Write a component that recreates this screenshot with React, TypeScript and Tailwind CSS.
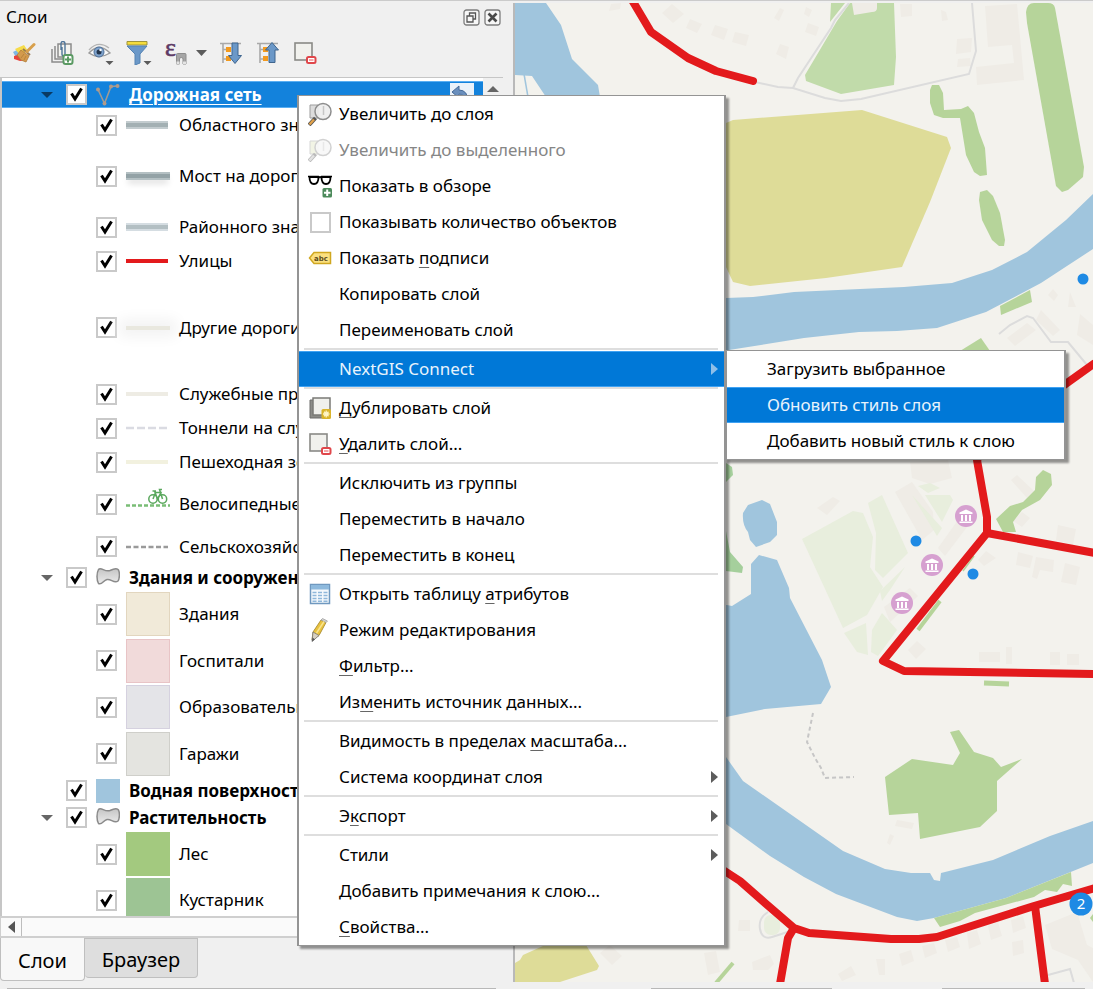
import { useState, type ReactNode } from "react";
import clsx from "clsx";

/* ---------- small drawings ---------- */

function CheckMark() {
  return (
    <svg viewBox="0 0 21 21" className="pointer-events-none col-start-1 row-start-1 size-[21px]" aria-hidden="true">
      <path d="M5.500 9.500 9 15 15.500 4.500" fill="none" stroke="#000" strokeWidth="3" />
    </svg>
  );
}

function CheckBox({ checked, onChange }: { checked: boolean; onChange: () => void }) {
  return (
    <span className="grid size-[21px] shrink-0">
      <input
        type="checkbox"
        checked={checked}
        onChange={onChange}
        className="col-start-1 row-start-1 size-[21px] appearance-none border-2 border-[#c9c9c9] bg-white"
      />
      {checked && <CheckMark />}
    </span>
  );
}

function PolygonIcon() {
  return (
    <svg viewBox="0 0 24 24" className="size-6" aria-hidden="true">
      <defs>
        <linearGradient id="poly" x1="0" y1="0" x2="0" y2="1">
          <stop offset="0" stopColor="#c4c4c4" />
          <stop offset="1" stopColor="#ececec" />
        </linearGradient>
      </defs>
      <path
        d="M2.500 3.500C5 .5 9 6.500 14 4.500C18 2.500 21 1.500 22.500 4C24 7 23.500 13 22 15C18 18 15 12.500 11 13.500C7 14.500 6 19.500 2.500 17.500C.5 14 .5 7 2.500 3.500Z"
        fill="url(#poly)"
        stroke="#8a8a8a"
        strokeWidth="1.500"
      />
    </svg>
  );
}

function LineIcon() {
  return (
    <svg viewBox="0 0 24 24" className="size-6" aria-hidden="true">
      <path d="M2 6.500 8.500 20.500 15 3.500 21.500 3" fill="none" stroke="#a09a94" strokeWidth="1.600" />
      <g fill="#b09a8a">
        <circle cx="2" cy="6.500" r="2" />
        <circle cx="8.500" cy="20.500" r="2" />
        <circle cx="15" cy="3.500" r="2" />
        <circle cx="21.500" cy="3" r="2" />
      </g>
    </svg>
  );
}

function BrushIcon() {
  return (
    <svg viewBox="0 0 24 24" className="size-6" aria-hidden="true">
      <path d="M1 11 5 9 10 16 5 18Z" fill="#7db8e6" />
      <path d="M3 8 12 4 16 10 8 14Z" fill="#f6dc4a" />
      <path d="M2 15 9 13 15 19 8 20 2 18Z" fill="#e8433b" />
      <path d="M9 9 17 15 14 21 9 19 5 14Z" fill="#d39a4c" stroke="#b17c38" strokeWidth=".8" />
      <path d="M11 8 18 14" stroke="#9a7850" strokeWidth="2" />
      <path d="M15 10.500 22 3.500" stroke="#d8a04c" strokeWidth="3" strokeLinecap="round" />
      <path d="M9 17 12 13M12 19 14 15" stroke="#b17c38" strokeWidth=".8" />
    </svg>
  );
}

function AddGroupIcon() {
  return (
    <svg viewBox="0 0 24 24" className="size-6" aria-hidden="true">
      <g fill="#f3f3ef" stroke="#8b8b8b" strokeWidth="1.500">
        <path d="M2 8V21H14" fill="none" />
        <path d="M5 5V18H17" fill="none" />
        <rect x="8" y="3" width="13" height="13" />
      </g>
      <path d="M11 9V3Q11 .5 13 .5T15 3V13Q15 15 13.500 15T12 13V6" fill="none" stroke="#4f7599" strokeWidth="1.400" />
      <rect x="13.500" y="14" width="9" height="9" rx="2" fill="#fff" stroke="#5b9a63" strokeWidth="2" />
      <path d="M18 15.500V21.500M15 18.500H21" stroke="#5b9a63" strokeWidth="2" />
    </svg>
  );
}

function EyeIcon() {
  return (
    <svg viewBox="0 0 26 24" className="h-6 w-[26px]" aria-hidden="true">
      <path d="M1 12Q11 1 22 12Q11 19 1 12Z" fill="#fbfbfb" stroke="#9b9b9b" strokeWidth="1.400" />
      <path d="M1 9Q10-1 21 7" fill="none" stroke="#b4b4b4" strokeWidth="1.300" />
      <circle cx="11" cy="11" r="5" fill="#7fa3cd" stroke="#4d6f98" />
      <circle cx="11" cy="11" r="2.500" fill="#24364e" />
      <circle cx="12.500" cy="9" r="1.200" fill="#fff" />
      <path d="M17.500 20H25.500L21.500 24Z" fill="#5b5b5b" />
    </svg>
  );
}

function FilterIcon() {
  return (
    <svg viewBox="0 0 26 24" className="h-6 w-[26px]" aria-hidden="true">
      <path d="M1 .5H21V4H1Z" fill="#f4dc3c" stroke="#a0953a" />
      <path d="M1 5H21L14 13V22L9 24V13Z" fill="#6b98c8" stroke="#5583b3" />
      <path d="M17.500 20H25.500L21.500 24Z" fill="#5b5b5b" />
    </svg>
  );
}

function ExpressionIcon() {
  return (
    <svg viewBox="0 0 24 24" className="size-6 overflow-visible" aria-hidden="true">
      <text x="1" y="15" fontSize="26" fill="#5d3a66" stroke="#5d3a66" strokeWidth=".6" fontFamily="Liberation Serif, serif">
        ε
      </text>
      <path d="M12.500 23V13.500Q12.500 12.500 13.500 12.500H21Q22 12.500 22 13.500V23H19V18Q19 16.500 17.200 16.500T15.500 18V23Z" fill="#a6a6a6" stroke="#8e8e8e" />
      <path d="M12.500 20.500H15.500V23H12.500ZM19 20.500H22V23H19Z" fill="#e4e4e4" />
    </svg>
  );
}

function TreeArrowIcon({ up }: { up?: boolean }) {
  return (
    <svg viewBox="0 0 24 24" className="size-6" aria-hidden="true">
      <path d="M1 2.500H22M4 2.500V22M4 8.500H8M4 18H8" fill="none" stroke="#a9a9a9" strokeWidth="1.600" />
      <rect x="7" y="6" width="5" height="5" fill="#f39a1e" />
      <rect x="7" y="15" width="5" height="5" fill="#f39a1e" />
      <path
        d={up ? "M13 21.500V9H9.500L16 1.500 22.500 9H19V21.500Z" : "M13 2V14.500H9.500L16 22.500 22.500 14.500H19V2Z"}
        fill="#6b98c8"
        stroke="#3f658e"
      />
    </svg>
  );
}

function RemoveIcon() {
  return (
    <svg viewBox="0 0 24 24" className="size-6" aria-hidden="true">
      <rect x="2" y="2" width="17" height="17" fill="#f1f1ed" stroke="#8a8a86" strokeWidth="1.600" />
      <rect x="14" y="16" width="8.500" height="6" rx="1.500" fill="#fff" stroke="#e0474b" strokeWidth="2" />
      <path d="M16 19H20.500" stroke="#f08a8c" strokeWidth="1.500" />
    </svg>
  );
}

function ZoomIcon({ faded }: { faded?: boolean }) {
  return (
    <svg viewBox="0 0 24 24" className={clsx("size-6", faded && "opacity-40")} aria-hidden="true">
      <path d="M2 3H10V16H2Z" fill={faded ? "#dfe6c0" : "#dcdcdc"} stroke="#9d9d9d" />
      <path d="M1 23 7.500 16" stroke="#555" strokeWidth="4" />
      <path d="M1.500 22.500 6 17.500" stroke={faded ? "#bbb" : "#e2a24a"} strokeWidth="2.400" />
      <circle cx="15" cy="9.500" r="8" fill="#ededed" fillOpacity=".9" stroke="#8d8d8d" strokeWidth="1.500" />
      <path d="M15.500 4V13" stroke="#c6c6c6" strokeWidth="1.500" />
    </svg>
  );
}

function OverviewIcon() {
  return (
    <svg viewBox="0 0 24 24" className="size-6" aria-hidden="true">
      <path d="M0 2.500H10.500L12 3.500 13.500 2.500H24" fill="none" stroke="#000" strokeWidth="1.500" />
      <path d="M1.500 3Q1.500 10 6 10T10.500 3ZM13.500 3Q13.500 10 18 10T22.500 3Z" fill="#fff" stroke="#000" strokeWidth="1.800" />
      <rect x="14.500" y="14" width="9.500" height="9.500" rx="1.500" fill="#4c8a5b" />
      <path d="M19.200 15.500V22M16 18.700H22.500" stroke="#fff" strokeWidth="2" />
    </svg>
  );
}

function LabelIcon() {
  return (
    <svg viewBox="0 0 24 24" className="size-6" aria-hidden="true">
      <path d="M6 6.500H22.500V17.500H6L1.500 12Z" fill="#fbe080" stroke="#d0a720" strokeWidth="1.500" />
      <text x="6" y="15" fontSize="7" fontWeight="700" fill="#5d4c1c" fontFamily="DejaVu Sans, sans-serif">
        abc
      </text>
    </svg>
  );
}

function DuplicateIcon() {
  return (
    <svg viewBox="0 0 24 24" className="size-6" aria-hidden="true">
      <path d="M2 4H7V18H17V22H2Z" fill="#8c8c88" stroke="#6d6d6a" />
      <rect x="5" y="2" width="17" height="17" fill="#f0f0ec" stroke="#7a7a76" strokeWidth="1.500" />
      <rect x="13.500" y="13" width="9.500" height="10" rx="1.500" fill="#d9b42c" />
      <path d="M18.200 14.500V21.500M15 18H21.500M16 15.700 20.500 20.300M20.500 15.700 16 20.300" stroke="#fff6c8" strokeWidth="1.300" />
    </svg>
  );
}

function TableIcon() {
  return (
    <svg viewBox="0 0 24 24" className="size-6" aria-hidden="true">
      <rect x="2.500" y="2.500" width="19" height="19" fill="#f4f8fc" stroke="#6f98bf" strokeWidth="1.500" />
      <path d="M3 3H21V7.500H3Z" fill="#8db9dd" />
      <path
        d="M4.500 10.500H8.500M10 10.500H14M15.500 10.500H19.500M4.500 13.500H8.500M10 13.500H14M15.500 13.500H19.500M4.500 16.500H8.500M10 16.500H14M15.500 16.500H19.500M4.500 19.200H8.500M10 19.200H14M15.500 19.200H19.500"
        stroke="#8fb7da"
        strokeWidth="1.600"
      />
    </svg>
  );
}

function PencilIcon() {
  return (
    <svg viewBox="0 0 24 24" className="size-6" aria-hidden="true">
      <path d="M5 14 13 2 18 4.500 11 17.500 4 22Z" fill="#e9c23e" stroke="#a98c30" strokeWidth=".9" />
      <path d="M13 2 14.500 .5 19.500 3 18 4.500Z" fill="#d2d2d2" stroke="#999" strokeWidth=".7" />
      <path d="M5 14 11 17.500 4 23.500Z" fill="#d8d0c0" stroke="#777" strokeWidth=".8" />
      <path d="M4.500 19.500 7 21.500 4 23.500Z" fill="#555" />
      <path d="M8.500 15 16 3.500" stroke="#f8e48f" strokeWidth="1.500" />
    </svg>
  );
}

function Bike() {
  return (
    <svg viewBox="0 0 44 34" className="h-[34px] w-11" aria-hidden="true">
      <g fill="none" stroke="#5ba85e" strokeWidth="1.500">
        <circle cx="27" cy="12" r="4.200" />
        <circle cx="36.500" cy="12" r="4.200" />
        <path d="M27 12 29.500 5.500H35L31.500 12 28.500 4M26.500 4H30M36.500 12 33.500 2.500H36" />
      </g>
      <path d="M0 18.500H44" stroke="#79bd76" strokeWidth="2.500" strokeDasharray="4 2" />
    </svg>
  );
}

/* ---------- layer tree ---------- */

type Row = {
  name: string;
  height: string;
  group?: boolean;
  expandable?: boolean;
  symbol: ReactNode;
};

const line = (cls: string) => <span className={clsx("block w-[42px]", cls)} />;
const dashes = (color: string, dash: string) => (
  <svg viewBox="0 0 42 4" className="h-1 w-[42px]" aria-hidden="true">
    <path d="M0 2H42" stroke={color} strokeWidth="2.500" strokeDasharray={dash} />
  </svg>
);
const fill = (cls: string) => <span className={clsx("block size-11 border", cls)} />;

const ROWS: Row[] = [
  { name: "Дорожная сеть", height: "h-[27px]", group: true, expandable: true, symbol: <LineIcon /> },
  { name: "Областного знач.", height: "h-[34px]", symbol: line("h-2 border-y-2 border-[#c3cccf] bg-[#a3b0b3]") },
  {
    name: "Мост на дороге",
    height: "h-[68px]",
    symbol: <span className="block h-2 w-11 border-y-2 border-[#b4c0c3] bg-[#93a2a6] shadow-[0_5px_6px_-2px_#d4d4d4]" />,
  },
  { name: "Районного знач.", height: "h-[34px]", symbol: line("h-2 border-y-2 border-[#d5dde2] bg-[#b3bfc3]") },
  { name: "Улицы", height: "h-[34px]", symbol: line("h-1 bg-[#e31a1c]") },
  {
    name: "Другие дороги",
    height: "h-[99px]",
    symbol: <span className="block h-1 w-11 bg-[#e9e8df] shadow-[0_0_14px_7px_#f3f3f3]" />,
  },
  { name: "Служебные пр-ды", height: "h-[34px]", symbol: line("h-1 bg-[#eeece4]") },
  { name: "Тоннели на служ.", height: "h-[34px]", symbol: dashes("#dadbe2", "8 3") },
  { name: "Пешеходная зона", height: "h-[34px]", symbol: line("h-1 bg-[#f2f1df]") },
  { name: "Велосипедные", height: "h-[50px]", symbol: <Bike /> },
  { name: "Сельскохозяйств.", height: "h-[35px]", symbol: dashes("#9a9a9a", "5 2.500") },
  { name: "Здания и сооружения", height: "h-[27px]", group: true, expandable: true, symbol: <PolygonIcon /> },
  { name: "Здания", height: "h-[46px]", symbol: fill("border-[#e2d6bf] bg-[#f1ead9]") },
  { name: "Госпитали", height: "h-[47px]", symbol: fill("border-[#e8c4c6] bg-[#f1dada]") },
  { name: "Образовательные", height: "h-[46px]", symbol: fill("border-[#d5d1df] bg-[#e4e4e8]") },
  { name: "Гаражи", height: "h-[47px]", symbol: fill("border-[#cfcfca] bg-[#e4e4e0]") },
  { name: "Водная поверхность", height: "h-[27px]", group: true, symbol: <span className="block size-6 bg-[#a0c5dd]" /> },
  { name: "Растительность", height: "h-[27px]", group: true, expandable: true, symbol: <PolygonIcon /> },
  { name: "Лес", height: "h-[46px]", symbol: fill("border-[#a3c97f] bg-[#a3c97f]") },
  { name: "Кустарник", height: "h-[46px]", symbol: fill("border-[#9dc494] bg-[#9dc494]") },
];

function TreeRow({ row, selected }: { row: Row; selected: boolean }) {
  const [checked, setChecked] = useState(true);
  return (
    <li
      className={clsx(
        "flex shrink-0 items-center",
        row.height,
        row.group ? "pl-[39px]" : "pl-[94px]",
        selected && "border-y border-[#5aaef2] bg-[#1382dc]",
      )}
    >
      {row.group && (
        <button type="button" aria-label={row.name} className={clsx("flex w-[25px] shrink-0", !row.expandable && "invisible")}>
          <svg viewBox="0 0 12 6" className="h-1.5 w-3" aria-hidden="true">
            <path d="M0 0H12L6 6Z" fill={selected ? "#0a3a63" : "#666"} />
          </svg>
        </button>
      )}
      <label className="flex h-full items-center gap-[9px]">
        <CheckBox checked={checked} onChange={() => setChecked(!checked)} />
        <span className={clsx("flex shrink-0 items-center", row.group ? "w-6" : "w-11")}>{row.symbol}</span>
        <span
          className={clsx(
            "whitespace-nowrap",
            row.group && "font-bold",
            selected && "text-white underline decoration-1 underline-offset-[3px]",
          )}
        >
          {row.name}
        </span>
      </label>
      {selected && (
        <button type="button" aria-label="Вернуть" className="ml-auto mr-[9px] bg-[#eaf2fa]">
          <svg viewBox="0 0 24 24" className="size-6" aria-hidden="true">
            <path d="M2 9 9 3V7Q18 7 18 19H15Q15 11 9 11V15Z" fill="#6a8fbd" stroke="#466a98" />
          </svg>
        </button>
      )}
    </li>
  );
}

function LayersPanel() {
  return (
    <aside className="flex w-[503px] shrink-0 flex-col">
      <header className="flex h-7 items-center justify-between pl-1.5 pr-0.5">
        <h1 className="text-[17px]">Слои</h1>
        <div className="flex gap-1">
          <button type="button" aria-label="Открепить">
            <svg viewBox="0 0 17 17" className="size-[17px]" aria-hidden="true">
              <rect x="1" y="1" width="15" height="15" rx="2.500" fill="#f7f7f7" stroke="#7d7d7d" strokeWidth="1.300" />
              <path d="M6.500 7V4H12.500V10H10M4 7H10V13H4Z" fill="none" stroke="#555" strokeWidth="1.300" />
            </svg>
          </button>
          <button type="button" aria-label="Закрыть">
            <svg viewBox="0 0 17 17" className="size-[17px]" aria-hidden="true">
              <rect x="1" y="1" width="15" height="15" rx="2.500" fill="#f7f7f7" stroke="#7d7d7d" strokeWidth="1.300" />
              <path d="M4.500 4.500 12.500 12.500M12.500 4.500 4.500 12.500" stroke="#4a4a4a" strokeWidth="2.600" />
            </svg>
          </button>
        </div>
      </header>

      <div className="flex h-[46px] items-center gap-3.5 pl-3 pb-0.5">
        <button type="button" aria-label="Стили слоя"><BrushIcon /></button>
        <button type="button" aria-label="Добавить группу"><AddGroupIcon /></button>
        <button type="button" aria-label="Видимость карты"><EyeIcon /></button>
        <button type="button" aria-label="Фильтр легенды" className="-ml-0.5"><FilterIcon /></button>
        <div className="-ml-0.5 flex items-center gap-2">
          <button type="button" aria-label="Фильтр по выражению"><ExpressionIcon /></button>
          <button type="button" aria-label="Параметры фильтра">
            <svg viewBox="0 0 11 6" className="h-1.5 w-[11px]" aria-hidden="true">
              <path d="M0 0H11L5.500 6Z" fill="#5b5b5b" />
            </svg>
          </button>
        </div>
        <div className="-ml-0.5 flex gap-[13px]">
          <button type="button" aria-label="Развернуть все"><TreeArrowIcon /></button>
          <button type="button" aria-label="Свернуть все"><TreeArrowIcon up /></button>
          <button type="button" aria-label="Удалить слой"><RemoveIcon /></button>
        </div>
      </div>

      <div className="flex min-h-0 flex-1 border-l-2 border-t border-[#c6c6c6] bg-white">
        <ul className="flex min-w-0 flex-1 flex-col overflow-hidden pt-[3px] text-[17px]">
          {ROWS.map((row, i) => (
            <TreeRow key={row.name} row={row} selected={i === 0} />
          ))}
        </ul>
        <div className="flex w-5 flex-col items-center bg-[#f0f0f0] pt-2">
          <svg viewBox="0 0 12 6" className="h-1.5 w-3" aria-hidden="true">
            <path d="M0 6H12L6 0Z" fill="#666" />
          </svg>
        </div>
      </div>
      <div className="flex h-[22px] shrink-0 border-y-2 border-l border-[#cfcfcf] bg-[#fafafa]">
        <button type="button" aria-label="Прокрутить влево" className="flex w-[21px] items-center justify-center border-r border-[#bdbdbd]">
          <svg viewBox="0 0 7 12" className="h-3 w-[7px]" aria-hidden="true">
            <path d="M7 0V12L0 6Z" fill="#555" />
          </svg>
        </button>
      </div>

      <div role="tablist" className="flex h-11 shrink-0 items-start text-[20px]">
        <button type="button" role="tab" aria-selected className="h-[43px] w-[85px] rounded-b border border-t-0 border-[#bfbfbf] bg-[#f8f8f8] pt-1">
          Слои
        </button>
        <button type="button" role="tab" aria-selected={false} className="h-10 w-[113px] rounded-b border border-l-0 border-[#bfbfbf] bg-[#dedede] pt-1">
          Браузер
        </button>
      </div>
    </aside>
  );
}

/* ---------- map ---------- */

const BUILDINGS = [
  "M611 4 621 3 620 9 609 11Z",
  "M662 13 672 4 684 14 673 23Z",
  "M690 19 702 24 697 33 686 28Z",
  "M715 25 728 29 724 40 711 35Z",
  "M735 32 749 35 746 46 732 42Z",
  "M780 44 789 47 786 59 776 54Z",
  "M780 8 784 10 779 21 774 18Z",
  "M808 23 819 27 816 36 805 32Z",
  "M806 7 812 10 809 17 804 14Z",
  "M900 4H912V16L901 17Z",
  "M941 10 946 12 948 20 942 21Z",
  "M957 39 972 38 971 52 956 54Z",
  "M958 59 970 58 971 66 957 67Z",
  "M985 6 1017 4 1024 80 977 85 976 67 1014 63 1012 45 988 47Z",
  "M1053 289 1058 295 1054 301 1048 295Z",
  "M1070 292 1076 307 1068 307Z",
  "M1041 310 1060 330 1053 336 1036 320Z",
  "M1007 338 1027 323 1036 330 1015 346Z",
  "M1080 314 1093 325V345L1077 335Z",
  "M895 492 912 482 933 512 934 530 922 540Z",
  "M884 607 910 588 918 596 890 622Z",
  "M938 548 958 520 967 527 945 556Z",
  "M817 508 833 497 840 501 827 515Z",
  "M910 462 948 460 952 478 930 484 912 478Z",
  "M1017 475 1034 491 1027 498 1011 480Z",
  "M1022 512 1030 518 1022 527 1013 521Z",
  "M1058 525 1076 529 1073 545 1056 540Z",
  "M1065 563 1080 567 1076 585 1061 582Z",
  "M1018 552 1033 556 1030 568 1016 565Z",
  "M1036 557 1054 560 1053 572 1040 570 1037 579 1032 577Z",
  "M986 551 996 558 984 566 978 560Z",
  "M917 641 926 649 916 659 908 650Z",
  "M979 652H1000V662H979Z",
  "M1006 647H1012V664H1006Z",
  "M1050 652H1060V665H1050Z",
  "M1067 654H1079V665H1067Z",
  "M897 820 914 823 912 829 895 826Z",
  "M890 834 894 836 890 845 887 843Z",
  "M739 920H750V931H738Z",
  "M610 945 622 956 612 965 600 953Z",
  "M704 953 716 951 720 972 708 975Z",
  "M752 962 770 955 774 964 768 970H753Z",
  "M838 974 851 966 856 975 842 981Z",
  "M876 959H885V975H879Z",
  "M899 954 911 950 914 961 902 966Z",
  "M922 946 934 943 937 953 925 958Z",
  "M945 940 957 937 960 947 948 952Z",
  "M967 933 977 930 981 944 969 949Z",
  "M988 926 998 922 1002 936 991 940Z",
  "M1011 920 1023 916 1026 928 1013 933Z",
  "M1012 942 1023 940 1024 953 1013 956Z",
  "M1045 925 1077 912 1087 945 1093 948V982L1078 960 1052 949Z",
];

const MUSEUMS = [
  [966, 516],
  [932, 565],
  [902, 603],
];

const POINTS = [
  [1083, 279],
  [916, 541],
  [973, 574],
];

function MapCanvas() {
  return (
    <svg
      viewBox="515 3 578 979"
      preserveAspectRatio="xMinYMin slice"
      className="absolute inset-0 size-full bg-[#f3f2ed]"
      role="img"
      aria-label="Карта"
    >
      <g fill="#efece6">
        {BUILDINGS.map((d) => (
          <path key={d} d={d} />
        ))}
      </g>
      <g fill="#e8eedd">
        <path d="M802 539 853 511 863 513 873 537 870 567 883 587 867 615 843 628Z" />
        <path d="M868 503 882 495 908 553 883 578 875 570 876 533Z" />
        <path d="M844 633 866 623 868 655 857 652Z" />
        <path d="M882 613 897 630 878 656 871 652 872 630Z" />
        <path d="M918 486 930 483 940 488 928 493Z" />
        <path d="M912 495 942 528 937 536Z" />
        <path d="M925 495 950 495 953 500 942 522Z" />
        <path d="M880 591 905 567 890 590 882 601Z" />
        <rect x="764" y="915" width="16" height="20" rx="7" />
      </g>
      <g fill="#a0c5dd">
        <path d="M515 3H546L561 25 572 59 598 85 600 97H546L532 76 515 75Z" />
        <path d="M700 299 726 298 753 297 794 292 904 287 952 283 992 270 1027 252 1066 220 1093 194V249L1041 283 986 312 937 328 897 331 859 332 804 338 729 350H700Z" />
        <path d="M743 513 748 505 762 500 770 504 777 522V535L770 542 756 547 750 540 748 532Q742 525 743 513Z" />
        <path d="M700 605H727L732 606 751 594V564L759 555 777 560 789 588 790 598 822 660 831 687 821 704 765 709 726 717H700Z" />
        <path d="M700 720 726 757 743 781 843 851 885 869 911 873H930L934 880 940 881 941 873 993 860 1050 836 1093 821V863L1006 898 934 918 917 921 897 917 836 894 804 877 770 856 726 824 700 800Z" />
      </g>
      <path d="M524 74 528 97" stroke="#a0c5dd" strokeWidth="1.500" />
      <g fill="#dedc98">
        <path d="M726 123 733 120 862 110 947 137 951 148 930 202 902 267 826 278 750 286 733 282 726 267Z" />
        <path d="M515 963 520 960 523 955 543 946 586 945 599 966 597 970 560 982H515Z" />
      </g>
      <path d="M805 75 806 81 841 94 894 85 896 57 894 3H850L837 21ZM831 3H845L830 22Z" fill="#c1dbaa" />
      <path d="M852 3H877V8Q877 12 872 12L854 15Z" fill="#efece6" />
      <g fill="#b6d49a">
        <path d="M1027 23 1026 12Q1027 3 1034 3H1048Q1054 3 1055 8L1084 167 1083 177 1068 190 1062 192 1056 186Z" />
        <path d="M932 85H939L943 93 944 110 961 109 968 106 974 113 979 132 985 148 987 175 980 176 974 172 966 155 960 118H943L934 115 930 103V90Z" />
        <path d="M980 192 987 190 993 196 1000 213 1005 240 1004 246H999L992 240 982 220 979 200Z" />
        <path d="M1000 306 1030 290 1032 302 1001 315Z" />
        <path d="M960 351 981 338 990 351Z" />
        <path d="M1043 470 1051 474 1052 485 1040 500 1022 510 1013 522 1016 532H1003L996 519 1010 506 1023 502 1035 490 1036 477Z" />
        <path d="M885 777 912 759 953 765 960 753 950 732 959 730 974 752 993 758 1001 767 1022 759 997 781V811L980 827 920 839 918 813 889 815Z" />
        <path d="M934 918 940 927 960 921 975 913 1034 897 1045 890 1057 892 1063 884 1072 886 1071 872 1006 898Z" />
        <path d="M1093 914 1090 918 1093 922Z" />
      </g>
      <g fill="#a5cf9c">
        <path d="M726 463 732 467 733 475 726 482Z" />
        <path d="M726 531 730 552 743 567 742 573 726 571Z" />
      </g>
      <g fill="none" stroke="#b6d49a" strokeWidth="4">
        <path d="M918 630 940 601" />
        <path d="M963 571 974 556" strokeWidth="1.500" />
        <path d="M984 683 1009 684" strokeWidth="5" />
        <path d="M716 983 733 963" />
      </g>
      <g fill="none" stroke="#dcdcdc" strokeWidth="2">
        <path d="M755 82 778 87 793 88 825 98 841 101 861 99 969 74 976 51 972 3" />
        <path d="M793 88 798 78 831 28 835 20 849 3" />
        <path d="M999 334 1010 325 1027 316 1033 318 1051 342 1068 342 1087 365" />
        <path d="M768 912Q758 918 760 929T772 937 790 931" />
        <path d="M1048 975 1070 969 1074 983" />
      </g>
      <path d="M813 713 807 742 815 758 821 768 825 778 854 777" fill="none" stroke="#c6c6c6" strokeWidth="2" strokeDasharray="4 3" />
      <g fill="none" stroke="#e31a1c" strokeWidth="8" strokeLinejoin="round">
        <path d="M632 0 651 32 688 58 716 71 753 81" strokeLinecap="round" />
        <path d="M1095 363 1060 388 1000 420 977 460 987 517V533L883 661 904 671 1095 674" />
        <path d="M987 533 1095 553" />
        <path d="M720 868 740 881 765 903 794 928 809 933 891 939H919L937 937 1034 906 1095 888" />
        <path d="M794 928 788 938 780 984M1035 906 1045 984" />
      </g>
      {MUSEUMS.map(([x, y]) => (
        <g key={x} transform={`translate(${x} ${y})`}>
          <circle r="11" fill="#d6a0d0" />
          <path d="M-6.500-3.500 0-6.500 6.500-3.500V-2H-6.500ZM-5-1H-3V5H-5ZM-1-1H1V5H-1ZM3-1H5V5H3ZM-6.500 5.500H6.500V7H-6.500Z" fill="#fff" />
        </g>
      ))}
      {POINTS.map(([x, y]) => (
        <circle key={x} cx={x} cy={y} r="5.500" fill="#1e8ae4" />
      ))}
      <circle cx="1081" cy="904" r="11.500" fill="#1e8ae4" />
      <text x="1081" y="909" textAnchor="middle" fontSize="15" fill="#fff">
        2
      </text>
    </svg>
  );
}

/* ---------- context menu ---------- */

type Item = { label: string; icon?: ReactNode; submenu?: boolean; disabled?: boolean; checkbox?: boolean };

// "&" marks the mnemonic letter, null is a separator
const MENU: (Item | null)[] = [
  { label: "Увеличить до слоя", icon: <ZoomIcon /> },
  { label: "Увеличить до выделенного", icon: <ZoomIcon faded />, disabled: true },
  { label: "Показать в обзоре", icon: <OverviewIcon /> },
  { label: "Показывать количество объектов", checkbox: true },
  { label: "Показать &подписи", icon: <LabelIcon /> },
  { label: "Копировать слой" },
  { label: "Переименовать слой" },
  null,
  { label: "NextGIS Connect", submenu: true },
  null,
  { label: "&Дублировать слой", icon: <DuplicateIcon /> },
  { label: "&Удалить слой...", icon: <RemoveIcon /> },
  null,
  { label: "Исключить из группы" },
  { label: "Переместить в начало" },
  { label: "Переместить в конец" },
  null,
  { label: "Открыть таблицу &атрибутов", icon: <TableIcon /> },
  { label: "Режим редактирования", icon: <PencilIcon /> },
  { label: "&Фильтр..." },
  { label: "Из&менить источник данных..." },
  null,
  { label: "Видимость в пределах &масштаба..." },
  { label: "Система координат слоя", submenu: true },
  null,
  { label: "Э&кспорт", submenu: true },
  null,
  { label: "Стили", submenu: true },
  { label: "Добавить примечания к слою..." },
  { label: "&Свойства..." },
];

const SUBMENU: Item[] = [
  { label: "Загрузить выбранное" },
  { label: "Обновить стиль слоя" },
  { label: "Добавить новый стиль к слою" },
];

function Mnemonic({ label }: { label: string }) {
  const at = label.indexOf("&");
  if (at < 0) return <>{label}</>;
  return (
    <>
      {label.slice(0, at)}
      <span className="underline decoration-[#666] decoration-1 underline-offset-[3px]">{label[at + 1]}</span>
      {label.slice(at + 2)}
    </>
  );
}

const ITEM = "flex h-9 w-full items-center text-left";
const ACTIVE = "border-y border-[#3fa2f3] bg-[#0078d7] text-[#e8f3fc]";

function MenuItem({ item, active }: { item: Item; active: boolean }) {
  const [checked, setChecked] = useState(false);
  if (item.checkbox) {
    return (
      <label className={clsx(ITEM, "gap-[7px] pl-[9px]")}>
        <span className="flex w-6 justify-center">
          <CheckBox checked={checked} onChange={() => setChecked(!checked)} />
        </span>
        {item.label}
      </label>
    );
  }
  return (
    <button
      type="button"
      role="menuitem"
      disabled={item.disabled}
      className={clsx(ITEM, "gap-[7px] pl-[9px] pr-1.5", active && ACTIVE, item.disabled && "text-[#868686]")}
    >
      <span className="w-6 shrink-0">{item.icon}</span>
      <span className="flex-1">
        <Mnemonic label={item.label} />
      </span>
      {item.submenu && (
        <svg viewBox="0 0 7 12" className="h-3 w-[7px]" aria-hidden="true">
          <path d="M0 0V12L7 6Z" fill={active ? "#8fbfe8" : "#5c5c5c"} />
        </svg>
      )}
    </button>
  );
}

const POPUP = "absolute border-x-2 border-y border-[#949494] bg-white text-[17px] shadow-[3px_3px_2px_rgba(0,0,0,0.4)]";

export default function App() {
  return (
    <div className="relative flex h-screen flex-col overflow-hidden bg-[#f0f0f0] font-['Noto_Sans','Open_Sans',sans-serif] text-black">
      <div className="mb-0.5 h-px shrink-0 bg-[#cbcbcb]" />
      <div className="flex min-h-0 flex-1 gap-2.5">
        <LayersPanel />
        <main className="relative min-w-0 flex-1 border-l-2 border-[#b9b9b9]">
          <MapCanvas />
        </main>
      </div>
      <div className="flex h-[7px] shrink-0 items-end">
        <div className="ml-[7px] h-px w-[489px] bg-[#b8b8b8]" />
        <div className="ml-[155px] h-px w-[181px] bg-[#b8b8b8]" />
        <div className="ml-[110px] h-px flex-1 bg-[#b8b8b8]" />
        <div className="w-2" />
      </div>

      <div role="menu" className={clsx(POPUP, "left-[297px] top-[95px] w-[429px]")}>
        {MENU.map((item, i) =>
          item ? (
            <MenuItem key={item.label} item={item} active={item.label === "NextGIS Connect"} />
          ) : (
            <hr key={i} className="ml-[5px] mr-1.5 h-[3px] border-t-2 border-[#dedede]" />
          ),
        )}
      </div>
      <div role="menu" className={clsx(POPUP, "left-[725px] top-[350px] w-[341px]")}>
        {SUBMENU.map((item, i) => (
          <button key={item.label} type="button" role="menuitem" className={clsx(ITEM, "pl-10", i === 1 && ACTIVE)}>
            {item.label}
          </button>
        ))}
      </div>
    </div>
  );
}
